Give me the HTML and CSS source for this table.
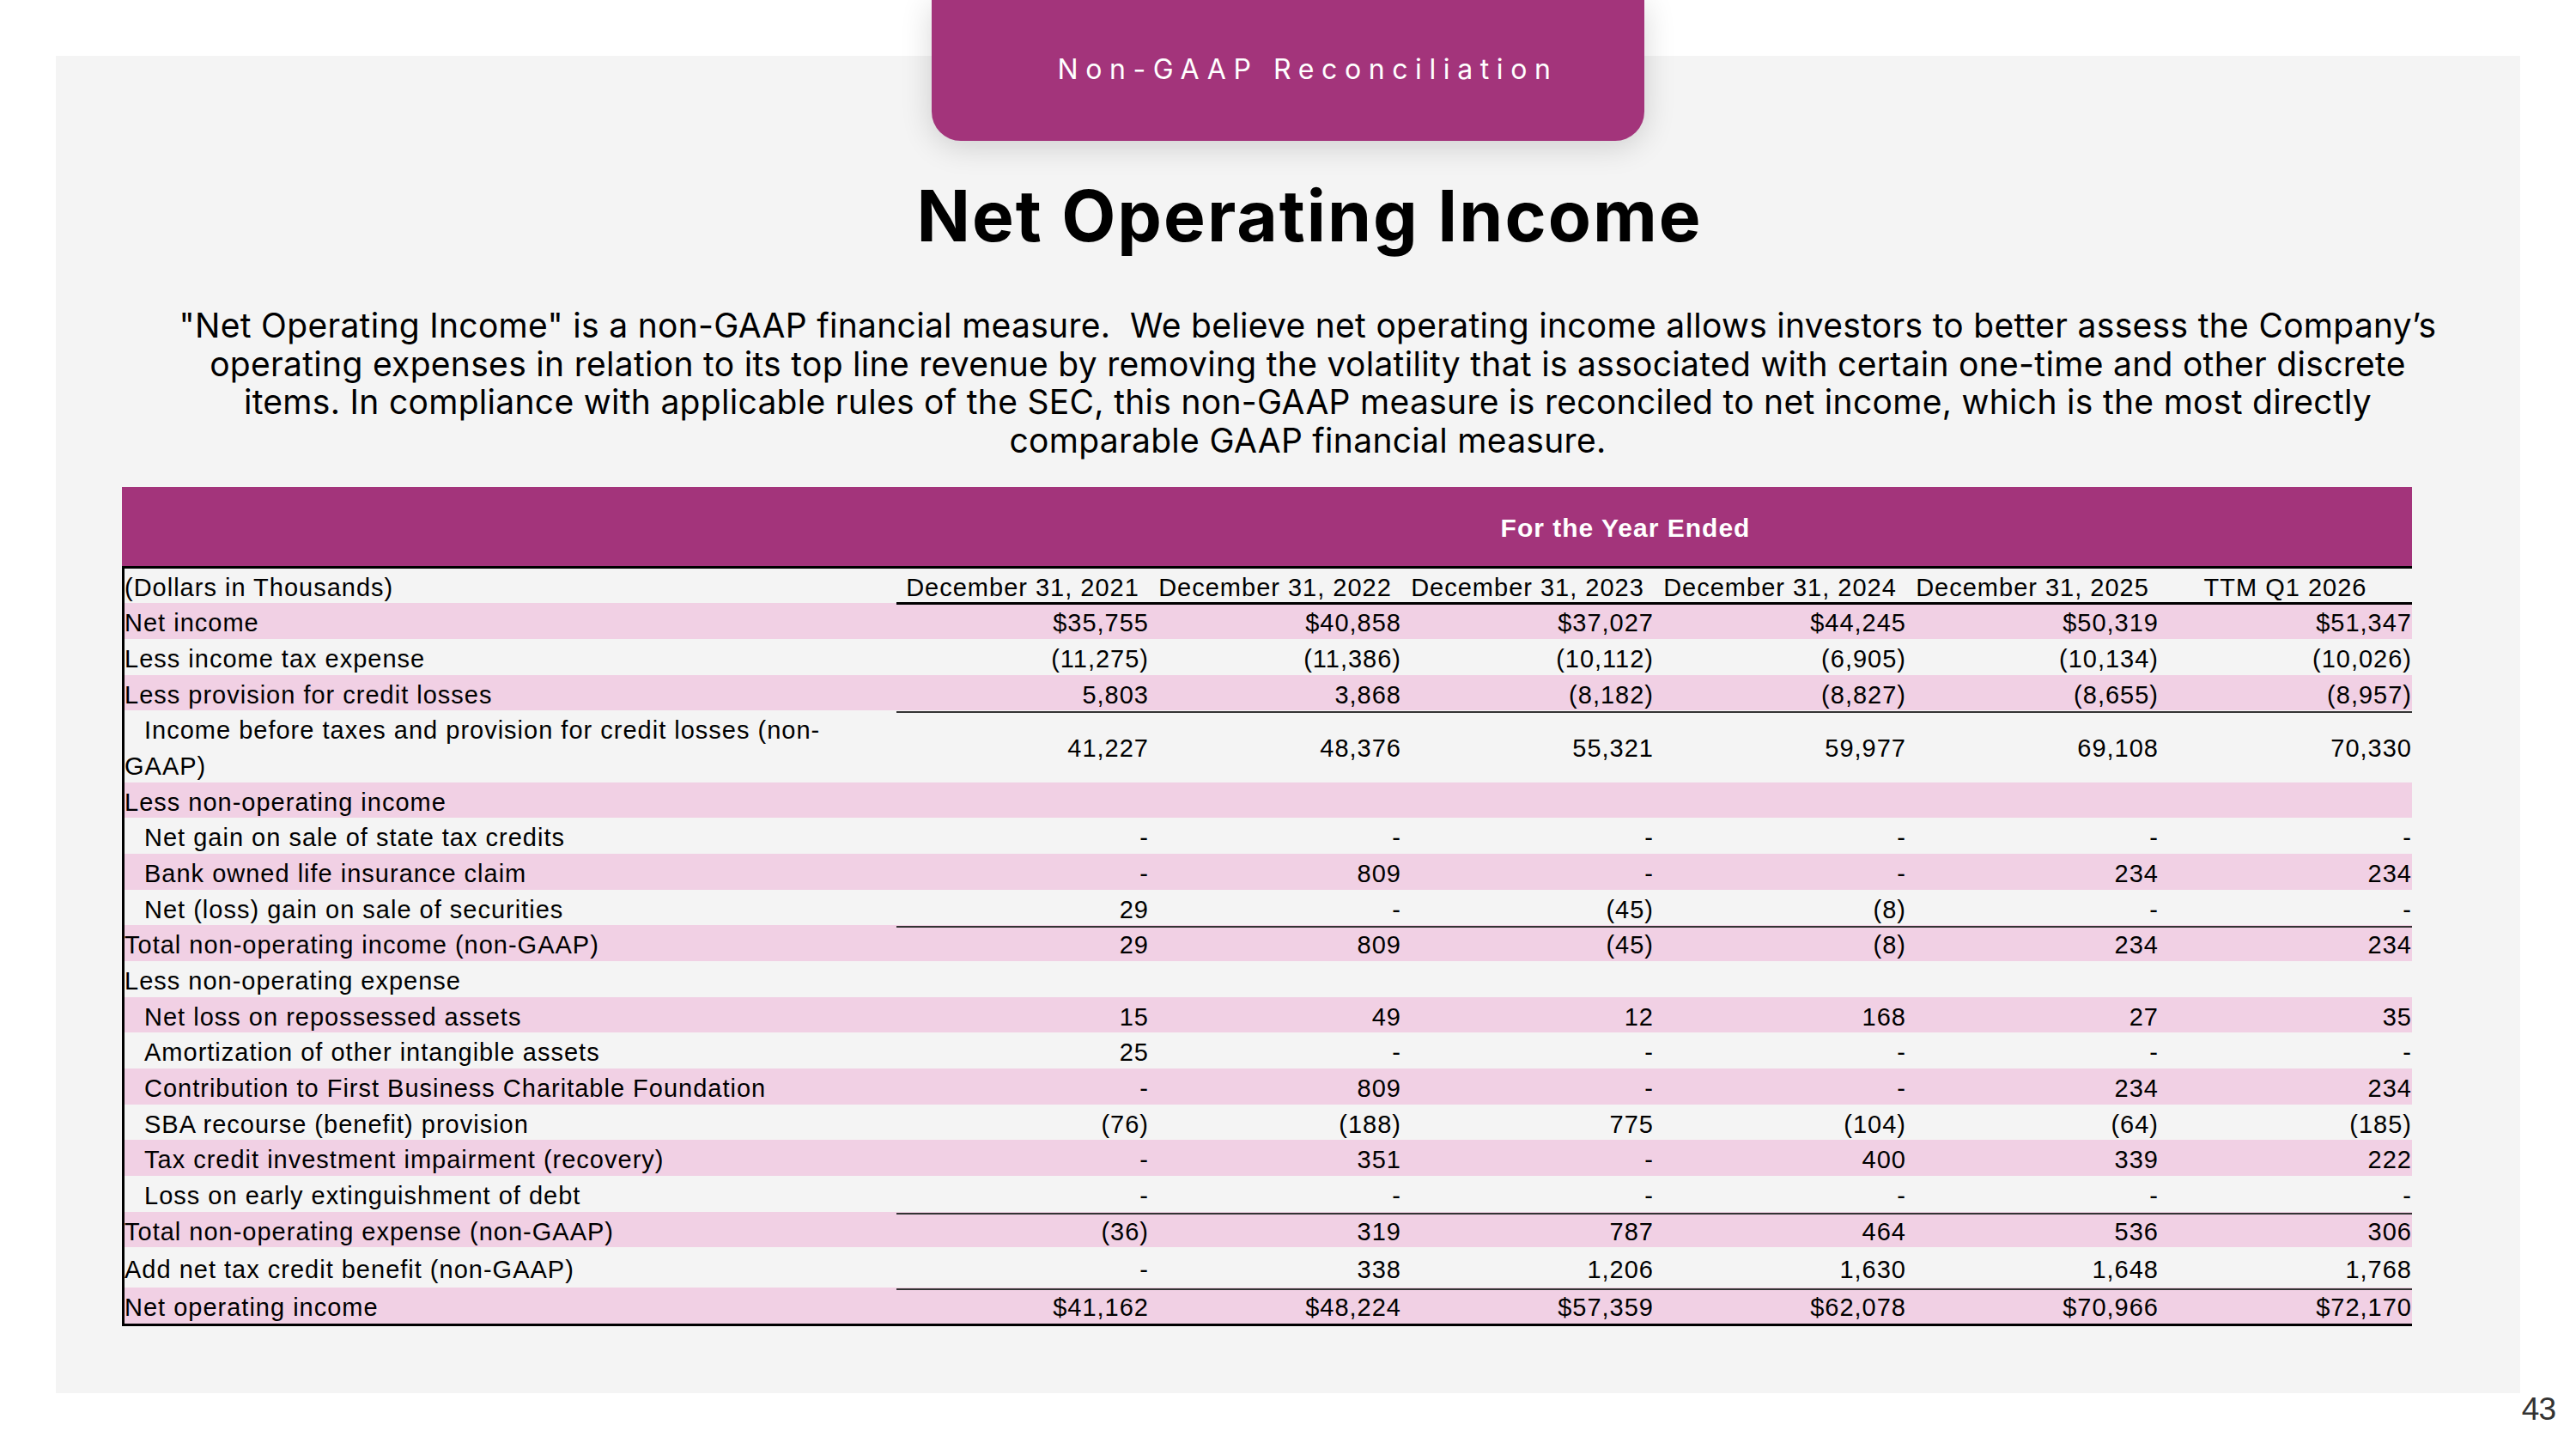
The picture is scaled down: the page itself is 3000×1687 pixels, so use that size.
FILE: index.html
```html
<!DOCTYPE html>
<html lang="en">
<head>
<meta charset="utf-8">
<title>Net Operating Income</title>
<link rel="stylesheet" href="styles.css">
</head>
<body>
<div class="page">
  <div class="tab">Non-GAAP Reconciliation</div>
  <div class="panel">
    <h1 class="title">Net Operating Income</h1>
    <p class="intro">"Net Operating Income" is a non-GAAP financial measure.&nbsp; We believe net operating income allows investors to better assess the Company’s<br>operating expenses in relation to its top line revenue by removing the volatility that is associated with certain one-time and other discrete<br>items. In compliance with applicable rules of the SEC, this non-GAAP measure is reconciled to net income, which is the most directly<br>comparable GAAP financial measure.</p>
    <div class="fin">
      <div class="band">For the Year Ended</div>
      <div class="grid">
        <div class="row head"><div class="lab">(Dollars in Thousands)</div><div class="v">December 31, 2021</div><div class="v">December 31, 2022</div><div class="v">December 31, 2023</div><div class="v">December 31, 2024</div><div class="v">December 31, 2025</div><div class="v">TTM Q1 2026</div></div>
        <div class="row pink"><div class="lab">Net income</div><div class="v">$35,755</div><div class="v">$40,858</div><div class="v">$37,027</div><div class="v">$44,245</div><div class="v">$50,319</div><div class="v">$51,347</div></div>
        <div class="row"><div class="lab">Less income tax expense</div><div class="v">(11,275)</div><div class="v">(11,386)</div><div class="v">(10,112)</div><div class="v">(6,905)</div><div class="v">(10,134)</div><div class="v">(10,026)</div></div>
        <div class="row pink rule"><div class="lab">Less provision for credit losses</div><div class="v">5,803</div><div class="v">3,868</div><div class="v">(8,182)</div><div class="v">(8,827)</div><div class="v">(8,655)</div><div class="v">(8,957)</div></div>
        <div class="row double"><div class="lab wrap"><span class="first">Income before taxes and provision for credit losses (non-</span><br>GAAP)</div><div class="v">41,227</div><div class="v">48,376</div><div class="v">55,321</div><div class="v">59,977</div><div class="v">69,108</div><div class="v">70,330</div></div>
        <div class="row pink"><div class="lab">Less non-operating income</div><div class="v"></div><div class="v"></div><div class="v"></div><div class="v"></div><div class="v"></div><div class="v"></div></div>
        <div class="row"><div class="lab ind">Net gain on sale of state tax credits</div><div class="v">-</div><div class="v">-</div><div class="v">-</div><div class="v">-</div><div class="v">-</div><div class="v">-</div></div>
        <div class="row pink"><div class="lab ind">Bank owned life insurance claim</div><div class="v">-</div><div class="v">809</div><div class="v">-</div><div class="v">-</div><div class="v">234</div><div class="v">234</div></div>
        <div class="row rule"><div class="lab ind">Net (loss) gain on sale of securities</div><div class="v">29</div><div class="v">-</div><div class="v">(45)</div><div class="v">(8)</div><div class="v">-</div><div class="v">-</div></div>
        <div class="row pink"><div class="lab">Total non-operating income (non-GAAP)</div><div class="v">29</div><div class="v">809</div><div class="v">(45)</div><div class="v">(8)</div><div class="v">234</div><div class="v">234</div></div>
        <div class="row"><div class="lab">Less non-operating expense</div><div class="v"></div><div class="v"></div><div class="v"></div><div class="v"></div><div class="v"></div><div class="v"></div></div>
        <div class="row pink"><div class="lab ind">Net loss on repossessed assets</div><div class="v">15</div><div class="v">49</div><div class="v">12</div><div class="v">168</div><div class="v">27</div><div class="v">35</div></div>
        <div class="row"><div class="lab ind">Amortization of other intangible assets</div><div class="v">25</div><div class="v">-</div><div class="v">-</div><div class="v">-</div><div class="v">-</div><div class="v">-</div></div>
        <div class="row pink"><div class="lab ind">Contribution to First Business Charitable Foundation</div><div class="v">-</div><div class="v">809</div><div class="v">-</div><div class="v">-</div><div class="v">234</div><div class="v">234</div></div>
        <div class="row"><div class="lab ind">SBA recourse (benefit) provision</div><div class="v">(76)</div><div class="v">(188)</div><div class="v">775</div><div class="v">(104)</div><div class="v">(64)</div><div class="v">(185)</div></div>
        <div class="row pink"><div class="lab ind">Tax credit investment impairment (recovery)</div><div class="v">-</div><div class="v">351</div><div class="v">-</div><div class="v">400</div><div class="v">339</div><div class="v">222</div></div>
        <div class="row rule"><div class="lab ind">Loss on early extinguishment of debt</div><div class="v">-</div><div class="v">-</div><div class="v">-</div><div class="v">-</div><div class="v">-</div><div class="v">-</div></div>
        <div class="row pink"><div class="lab">Total non-operating expense (non-GAAP)</div><div class="v">(36)</div><div class="v">319</div><div class="v">787</div><div class="v">464</div><div class="v">536</div><div class="v">306</div></div>
        <div class="row rule add"><div class="lab">Add net tax credit benefit (non-GAAP)</div><div class="v">-</div><div class="v">338</div><div class="v">1,206</div><div class="v">1,630</div><div class="v">1,648</div><div class="v">1,768</div></div>
        <div class="row pink last"><div class="lab">Net operating income</div><div class="v">$41,162</div><div class="v">$48,224</div><div class="v">$57,359</div><div class="v">$62,078</div><div class="v">$70,966</div><div class="v">$72,170</div></div>
      </div>
    </div>
  </div>
  <div class="footer"><span class="pagenum">43</span></div>
</div>
</body>
</html>
```

FILE: styles.css
```css
* { box-sizing: border-box; }

body {
  margin: 0;
  background: #ffffff;
}

.page {
  position: relative;
  width: 3000px;
  height: 1687px;
  padding-top: 65px;
}

.panel {
  margin: 0 65px;
  height: 1557px;
  background: #f4f4f4;
  padding-top: 137px;
}

.tab {
  position: absolute;
  top: 0;
  left: 1085px;
  width: 830px;
  height: 164px;
  background: #a3347b;
  border-radius: 0 0 34px 34px;
  box-shadow: 0 6px 36px rgba(0, 0, 0, 0.16);
  display: flex;
  align-items: center;
  justify-content: center;
  padding: 0 0 4px 46px;
  color: #ffffff;
  font-family: Inter, "Noto Sans", sans-serif;
  font-size: 32px;
  letter-spacing: 8.6px;
  z-index: 2;
}

.title {
  margin: 0;
  font-family: Inter, "Noto Sans", sans-serif;
  font-weight: 700;
  font-size: 82px;
  letter-spacing: 2px;
  line-height: 100px;
  text-align: center;
  padding-left: 50px;
  color: #000000;
}

.intro {
  margin: 55px 0 0;
  font-family: Inter, "Noto Sans", sans-serif;
  font-size: 39px;
  letter-spacing: 0.3px;
  line-height: 44.6px;
  text-align: center;
  padding-left: 46px;
  white-space: nowrap;
  color: #000000;
}

.fin {
  margin: 32px 0 0 77px;
  width: 2667px;
  font-family: "Liberation Sans", Arial, sans-serif;
  font-size: 29px;
  letter-spacing: 1px;
  color: #000000;
}

.band {
  height: 92px;
  background: #a3347b;
  color: #ffffff;
  font-weight: 700;
  font-size: 30px;
  display: flex;
  align-items: center;
  justify-content: center;
  padding: 4px 0 0 835px;
}

.grid {
  border-top: 3px solid #000000;
  border-left: 3px solid #000000;
  border-bottom: 3px solid #000000;
}

.row {
  display: grid;
  grid-template-columns: 899px repeat(5, 294px) 1fr;
  height: 41.67px;
  line-height: 41.67px;
}

.row.pink { background: #f1d0e4; }

.lab,
.v { padding-top: 3px; }

.row.head {
  height: 40px;
  line-height: 40px;
}

.row.head .lab,
.row.head .v { padding-top: 2px; }

.row.head .v {
  text-align: center;
  box-shadow: inset 0 -3px 0 #000000;
}

.v {
  text-align: right;
  white-space: nowrap;
}

.row.rule .v { box-shadow: inset 0 -2px 0 #333333; }

.lab { white-space: nowrap; }

.ind { padding-left: 23px; }

.row.double {
  height: 83.34px;
  line-height: 83.34px;
}

.row.double .lab { line-height: 41.67px; }

.first { padding-left: 23px; }

.row.add {
  height: 47px;
  line-height: 47px;
}

.footer {
  display: flex;
  justify-content: flex-end;
  padding-right: 24px;
}

.pagenum {
  font-family: "Liberation Sans", Arial, sans-serif;
  font-size: 37px;
  letter-spacing: -1px;
  line-height: 38px;
  color: #333333;
}
```
